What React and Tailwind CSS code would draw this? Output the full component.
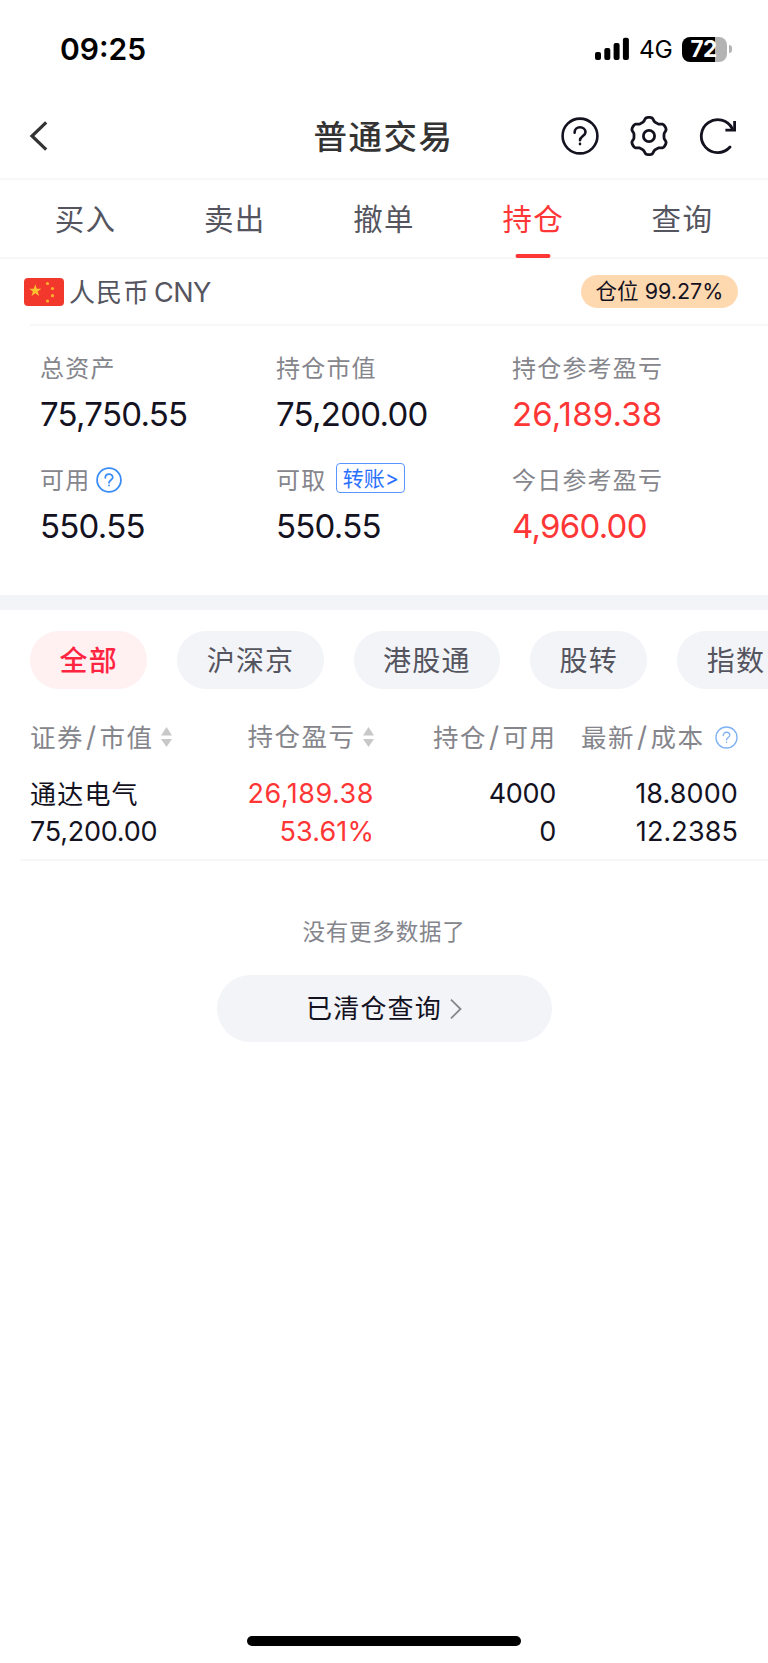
import React, { useState } from "react";

const TABS = ["买入", "卖出", "撤单", "持仓", "查询"];
const FILTERS = ["全部", "沪深京", "港股通", "股转", "指数"];

const HOLDINGS = [
  {
    name: "通达电气",
    value: "75,200.00",
    profit: "26,189.38",
    rate: "53.61%",
    amount: "4000",
    available: "0",
    price: "18.8000",
    cost: "12.2385",
  },
];

// Six-lobed gear outline around (19, 20)
const GEAR_POINTS = Array.from({ length: 120 }, (_, i) => {
  const a = (i / 120) * Math.PI * 2;
  const r = 16.8 + (1.8 * Math.tanh(1.8 * Math.cos(6 * a))) / Math.tanh(1.8);
  return `${(19 + r * Math.sin(a)).toFixed(2)},${(20 - r * Math.cos(a)).toFixed(2)}`;
}).join(" ");

function QuestionIcon({ size, stroke, className }) {
  return (
    <svg
      width={size}
      height={size}
      viewBox="0 0 38 38"
      fill="none"
      stroke="currentColor"
      strokeWidth={stroke}
      strokeLinecap="round"
      strokeLinejoin="round"
      className={className}
    >
      <circle cx="19" cy="19" r="17.4" />
      <path d="M13.6 15.800c0-3.400 2.400-5.500 5.400-5.500s5.500 2.100 5.500 5c0 3.500-5.500 4-5.500 7.900" />
      <path d="M19 26.900v.2" />
    </svg>
  );
}

function StatusBar() {
  return (
    <div className="flex h-[99px] shrink-0 items-center pr-[36px] pb-px pl-[60px]">
      <span className="text-[30px] leading-none font-semibold text-black">09:25</span>
      <svg width="35" height="24" viewBox="0 0 35 24" className="ml-auto">
        <rect x="0" y="15" width="6" height="8" rx="2" />
        <rect x="9.3" y="11" width="6" height="12" rx="2" />
        <rect x="18.6" y="6" width="6" height="17" rx="2" />
        <rect x="27.9" y="0.7" width="6" height="22.3" rx="2" />
      </svg>
      <span className="ml-[9px] w-[33px] pt-px text-[24.5px] leading-none tracking-[-0.3px] text-black">4G</span>
      <div className="ml-[10px] flex h-[25px] w-[45px] items-center justify-center rounded-[8px] bg-linear-to-r from-black from-73% to-[#b3b3b3] to-73% pr-[2px]">
        <span className="text-[22.5px] leading-none font-bold tracking-[-0.6px] text-white">72</span>
      </div>
      <div className="ml-[2px] h-[8px] w-[3px] rounded-r-full bg-[#b3b3b3]" />
    </div>
  );
}

function Header() {
  return (
    <div className="grid h-[81px] shrink-0 grid-cols-[1fr_auto_1fr] items-center border-b-2 border-[#f7f7f7] pr-[31px] pb-[5px] pl-[29px]">
      <svg width="20" height="32" viewBox="0 0 20 32" fill="none" stroke="#333" strokeWidth="3.2">
        <path d="M17.2 2.300 3 16l14.200 13.700" />
      </svg>
      <h1 className="pt-[4px] pl-[1px] text-[33.5px] leading-none font-medium tracking-[1.5px] text-[#333]">普通交易</h1>
      <div className="flex items-center justify-end gap-[31px] text-[#14121f]">
        <QuestionIcon size={38} stroke={2.6} />
        <svg width="38" height="40" viewBox="0 0 38 40" fill="none" stroke="currentColor" strokeWidth="2.8" strokeLinejoin="round">
          <polygon points={GEAR_POINTS} />
          <circle cx="19" cy="20" r="5.6" />
        </svg>
        <svg width="38" height="38" viewBox="0 0 38 38" fill="none" stroke="currentColor" strokeWidth="2.8">
          <path d="M31 30A16.400 16.400 0 1 1 33.200 11.500" strokeLinecap="round" />
          <path d="M35.600 4v9.200h-9.200" />
        </svg>
      </div>
    </div>
  );
}

function Amount({ label, value, red, spaced, children }) {
  return (
    <div>
      <div className="flex h-[34px] items-center pt-[2px] text-[24px] leading-none tracking-[1.2px] text-[#85858c]">
        <span>{label}</span>
        {children}
      </div>
      <div
        className={`mt-[12px] h-[34px] text-[33px] leading-[34px] ${
          spaced ? "tracking-[0.15px]" : "tracking-[-0.75px]"
        } ${red ? "text-[#ff3636]" : "text-[#14121f]"}`}
      >
        {value}
      </div>
    </div>
  );
}

function SortIcon() {
  return (
    <svg width="11" height="20" viewBox="0 0 11 20" fill="#c8c8c8" className="ml-[7px]">
      <path d="M5.500 0 11 8.500H0zM5.500 20 0 12h11z" />
    </svg>
  );
}

function Pair({ left, right }) {
  return (
    <span>
      {left}
      <span className="mr-[2px] ml-[2px] inline-block text-[28px] leading-none">/</span>
      {right}
    </span>
  );
}

export default function App() {
  const [tab, setTab] = useState("持仓");
  const [filter, setFilter] = useState("全部");

  return (
    <div className="flex h-[1663px] w-[768px] flex-col overflow-hidden bg-white font-['Inter','Noto_Sans_CJK_SC',sans-serif] whitespace-nowrap">
      <StatusBar />
      <Header />

      {/* Trade tabs */}
      <div className="grid h-[79px] shrink-0 grid-cols-5 border-b-2 border-[#f7f7f7] px-[11px]">
        {TABS.map((t) => (
          <button
            key={t}
            onClick={() => setTab(t)}
            className={`relative pt-[2px] text-[29.5px] leading-none tracking-[1.3px] ${
              t === tab ? "text-[#ff3636]" : "text-[#55555f]"
            }`}
          >
            {t}
            {t === tab && (
              <span className="absolute bottom-[-1px] left-1/2 h-[4px] w-[35px] -translate-x-1/2 rounded-full bg-[#ff3636]" />
            )}
          </button>
        ))}
      </div>

      {/* Currency */}
      <div className="flex h-[65px] shrink-0 items-center pr-[30px] pl-[24px]">
        <svg width="40" height="28" viewBox="0 0 40 28">
          <rect width="40" height="28" rx="4" fill="#f2382c" />
          <path fill="#fcc230" d="M11.300 6.200l1.500 4.500h4.600l-3.700 2.800 1.400 4.500-3.800-2.800-3.800 2.800 1.400-4.500-3.700-2.800h4.600z" />
          <g fill="#fcb030">
            <circle cx="23.500" cy="5.500" r="1.600" />
            <circle cx="28.500" cy="10.500" r="1.600" />
            <circle cx="28.500" cy="17.700" r="1.600" />
            <circle cx="23.500" cy="23" r="1.600" />
          </g>
        </svg>
        <span className="ml-[5px] pt-[2px] text-[26px] leading-none tracking-[1px] text-[#55555f]">人民币</span>
        <span className="ml-[4px] pt-px text-[27px] leading-none tracking-[-0.5px] text-[#55555f]">CNY</span>
        <span className="ml-auto flex h-[33px] w-[157px] items-center justify-center rounded-full bg-[#fed9b0] text-[21.5px] leading-none text-[#14121f]">
          仓位 99.27%
        </span>
      </div>

      {/* Assets */}
      <div className="ml-[30px] h-[2px] shrink-0 bg-[#f7f7f7]" />
      <div className="grid h-[269px] shrink-0 grid-cols-[236px_236px_1fr] content-start gap-y-[32px] pt-[25px] pl-[40px]">
        <Amount label="总资产" value="75,750.55" />
        <Amount label="持仓市值" value="75,200.00" />
        <Amount label="持仓参考盈亏" value="26,189.38" red spaced />
        <Amount label="可用" value="550.55">
          <QuestionIcon size={26} stroke={2.6} className="mb-[2px] ml-[6px] text-[#3b8cf5]" />
        </Amount>
        <Amount label="可取" value="550.55">
          <span className="mb-[6px] ml-[10px] flex h-[30px] w-[69px] items-center justify-center rounded-[4px] border border-[#5b95ff] text-[21px] tracking-[0.2px] text-[#2b6fff]">
            转账&gt;
          </span>
        </Amount>
        <Amount label="今日参考盈亏" value="4,960.00" red />
      </div>
      <div className="h-[15px] shrink-0 bg-[#f2f4f8]" />

      {/* Market filter */}
      <div className="flex gap-[29.8px] pt-[21px] pl-[30px]">
        {FILTERS.map((f) => (
          <button
            key={f}
            onClick={() => setFilter(f)}
            className={`h-[58px] shrink-0 rounded-full px-[29.5px] pt-[2px] text-[28px] leading-none tracking-[1.2px] ${
              f === filter ? "bg-[#fff0f2] font-medium text-[#ff2440]" : "bg-[#f2f4f8] text-[#55555f]"
            }`}
          >
            {f}
          </button>
        ))}
      </div>

      {/* Holdings */}
      <div className="mt-[24px] grid h-[48px] shrink-0 grid-cols-[160px_183.5px_183px_181px] items-center pl-[30px] text-[25.5px] leading-none tracking-[1.5px] text-[#85858c]">
        <span className="flex items-center">
          <Pair left="证券" right="市值" />
          <SortIcon />
        </span>
        <span className="flex items-center justify-end">
          持仓盈亏
          <SortIcon />
        </span>
        <span className="text-right">
          <Pair left="持仓" right="可用" />
        </span>
        <span className="flex items-center justify-end">
          <Pair left="最新" right="成本" />
          <QuestionIcon size={23} stroke={2.2} className="ml-[10px] text-[#7fb2f5]" />
        </span>
      </div>
      {HOLDINGS.map((h) => (
        <div
          key={h.name}
          className="grid h-[98px] shrink-0 grid-cols-[160px_184px_182px_182px] pt-[14px] pl-[30px] text-[27px] leading-[37.5px] tracking-[-0.3px] text-[#14121f]"
        >
          <div>
            <div className="h-[37.5px] pt-px text-[26px] tracking-[1.2px]">{h.name}</div>
            <div className="tracking-[-0.25px]">{h.value}</div>
          </div>
          <div className="text-right text-[#ff3636]">
            <div className="tracking-[0.5px]">{h.profit}</div>
            <div className="tracking-[0.1px]">{h.rate}</div>
          </div>
          <div className="text-right">
            <div>{h.amount}</div>
            <div>{h.available}</div>
          </div>
          <div className="text-right tracking-[0.1px]">
            <div>{h.price}</div>
            <div>{h.cost}</div>
          </div>
        </div>
      ))}
      <div className="ml-[20px] h-[2px] shrink-0 bg-[#f7f7f7]" />

      <div className="mt-[59px] text-center text-[22.5px] leading-[24px] tracking-[0.8px] text-[#85858c]">没有更多数据了</div>
      <button className="mx-auto mt-[31px] flex h-[67px] w-[335px] items-center justify-center rounded-full bg-[#f2f4f8] text-[26px] leading-none tracking-[1.2px] text-[#14121f]">
        已清仓查询
        <svg width="12" height="20" viewBox="0 0 12 20" fill="none" stroke="#85858c" strokeWidth="1.8" className="ml-[8px]">
          <path d="M1 .7 10.500 10 1 19.300" />
        </svg>
      </button>

      <div className="mx-auto mt-auto mb-[17px] h-[10px] w-[274px] rounded-full bg-black" />
    </div>
  );
}
